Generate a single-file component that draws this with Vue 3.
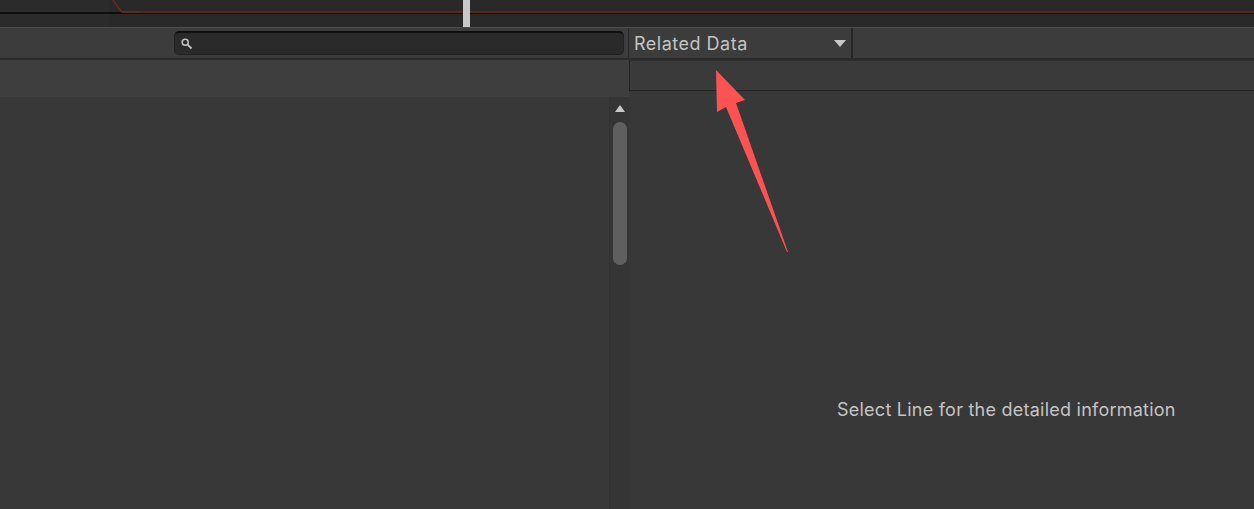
<script setup>
</script>

<template>
  <div class="page">
    <div class="timeline">
      <div class="gutter"></div>
      <div class="track"></div>
      <svg class="curve" width="30" height="14" viewBox="0 0 30 14"><path d="M3 0 L11.5 12 L30 12" fill="none" stroke="#6a2a18" stroke-width="1.6"/></svg>
      <div class="tick"></div>
    </div>
    <div class="toolbar">
      <div class="tool-left">
        <div class="search">
          <svg width="14" height="14" viewBox="0 0 14 14"><circle cx="5.2" cy="5.2" r="3" fill="none" stroke="#c4c4c4" stroke-width="1.5"/><path d="M7.6 7.6 L11.5 11.5" stroke="#c4c4c4" stroke-width="1.8"/></svg>
        </div>
      </div>
      <div class="dropdown">
        <span>Related Data</span>
        <i class="caret"></i>
      </div>
      <div class="tool-right"></div>
    </div>
    <div class="content">
      <div class="left">
        <div class="head"></div>
        <div class="list">
          <div class="rows"></div>
          <div class="scrollbar">
            <i class="up"></i>
            <div class="thumb"></div>
          </div>
        </div>
      </div>
      <div class="right">
        <div class="box"></div>
        <div class="msg">Select Line for the detailed information</div>
      </div>
    </div>
    <svg class="arrow" width="90" height="195" viewBox="0 0 90 195">
      <path d="M5 5 L34 35 L25 38 L77 187 L76 187 L15 42 L6 47 Z" fill="#fd5252"/>
    </svg>
  </div>
</template>

<style>
html, body { margin: 0; background: #383838; }
</style>

<style scoped>
.page { position: relative; width: 1254px; height: 509px; overflow: hidden; background: #383838; font-family: Inter, "Liberation Sans", sans-serif; color: #c4c4c4; }
.timeline { position: relative; height: 27px; display: flex; background: #282828; }
.gutter { width: 109px; background: #2b2b2b; }
.track { flex: 1; background: #292929; }
.timeline::after { content: ""; position: absolute; left: 0; right: 0; top: 12px; height: 2px; background: #0e0e0e; }
.timeline::before { content: ""; position: absolute; left: 122px; right: 0; top: 11px; height: 2px; background: #5f2614; z-index: 1; }
.curve { position: absolute; left: 110px; top: 0; z-index: 2; }
.tick { position: absolute; left: 463px; top: 0; width: 7px; height: 27px; background: #c8c8c8; z-index: 3; }
.toolbar { display: flex; height: 30px; background: #3c3c3c; border-top: 1px solid #4d4d4d; border-bottom: 2px solid #2a2a2a; }
.tool-left { width: 628px; display: flex; align-items: center; border-right: 1px solid #2a2a2a; }
.search { margin-left: 174px; width: 450px; height: 24px; box-sizing: border-box; border-radius: 5px; background: #2a2a2a; border: 1px solid #212121; border-top: 2px solid #0f0f0f; display: flex; align-items: center; padding-left: 5px; }
.dropdown { width: 224px; display: flex; align-items: center; justify-content: space-between; padding: 0 5px 0 5px; box-sizing: border-box; font-size: 18px; letter-spacing: 0.5px; border-right: 2px solid #262626; }
.caret { width: 0; height: 0; border-left: 6px solid transparent; border-right: 6px solid transparent; border-top: 7px solid #c8c8c8; }
.tool-right { flex: 1; }
.content { display: flex; height: 449px; }
.left { width: 629px; display: flex; flex-direction: column; }
.head { height: 37px; background: #3e3e3e; }
.list { flex: 1; display: flex; }
.rows { width: 609px; border-right: 1px solid #323232; }
.scrollbar { flex: 1; background: #353535; display: flex; flex-direction: column; align-items: center; padding-top: 8px; }
.up { width: 0; height: 0; border-left: 5.5px solid transparent; border-right: 5.5px solid transparent; border-bottom: 7px solid #c8c8c8; }
.thumb { width: 14px; height: 143px; margin-top: 10px; border-radius: 7px; background: #5f5f5f; }
.right { flex: 1; display: flex; flex-direction: column; }
.box { height: 29px; border: 1px solid #242424; border-right: 0; border-top-color: #2e2e2e; background: #3a3a3a; }
.msg { margin-top: 308px; margin-left: 208px; font-size: 18px; letter-spacing: 0.24px; line-height: 22px; white-space: nowrap; }
.arrow { position: absolute; left: 711px; top: 65px; overflow: visible; }
</style>
